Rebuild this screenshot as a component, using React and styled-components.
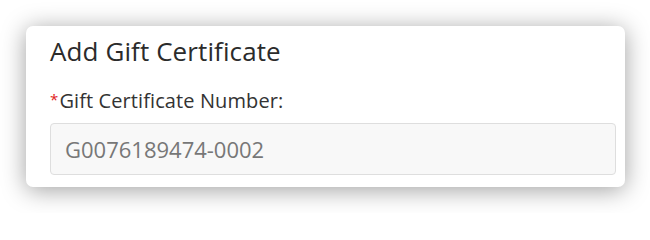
import styled, { createGlobalStyle } from 'styled-components'

const GlobalStyle = createGlobalStyle`
    html, body {
        margin: 0;
        padding: 0;
        background: #ffffff;
    }
    body {
        font-family: "Open Sans", Lato, Arial, sans-serif;
    }
`

const Page = styled.div`
    padding: 26px 25px 26px 26px;
`

const Card = styled.div`
    background: #ffffff;
    border-radius: 7px;
    box-shadow: 0 3px 24px rgba(0, 0, 0, 0.38);
    padding: 9px 9px 12px 24px;
    height: 161px;
    box-sizing: border-box;
`

const Title = styled.h2`
    margin: 0;
    font-size: 26px;
    font-weight: 400;
    color: #2b2b2b;
    line-height: 32px;
    letter-spacing: 0.1px;
`

const Label = styled.label`
    display: block;
    margin-top: 22px;
    font-size: 20px;
    color: #333333;
    line-height: 24px;
    height: 24px;
    letter-spacing: 0.1px;
`

const Required = styled.span`
    color: #e02020;
    font-size: 15px;
    line-height: 0;
    vertical-align: 3px;
    margin-right: 1px;
`

const Input = styled.input`
    display: block;
    box-sizing: border-box;
    width: 100%;
    height: 52px;
    margin-top: 10px;
    padding: 0 14px;
    border: 1px solid #dedede;
    border-radius: 4px;
    background: #f8f8f8;
    font-family: inherit;
    font-size: 22px;
    color: #777777;
    outline: none;
`

export default function App() {
    return (
        <>
            <GlobalStyle />
            <Page>
                <Card>
                    <Title>Add Gift Certificate</Title>
                    <Label>
                        <Required>*</Required>Gift Certificate Number:
                    </Label>
                    <Input readOnly value="G0076189474-0002" />
                </Card>
            </Page>
        </>
    )
}
